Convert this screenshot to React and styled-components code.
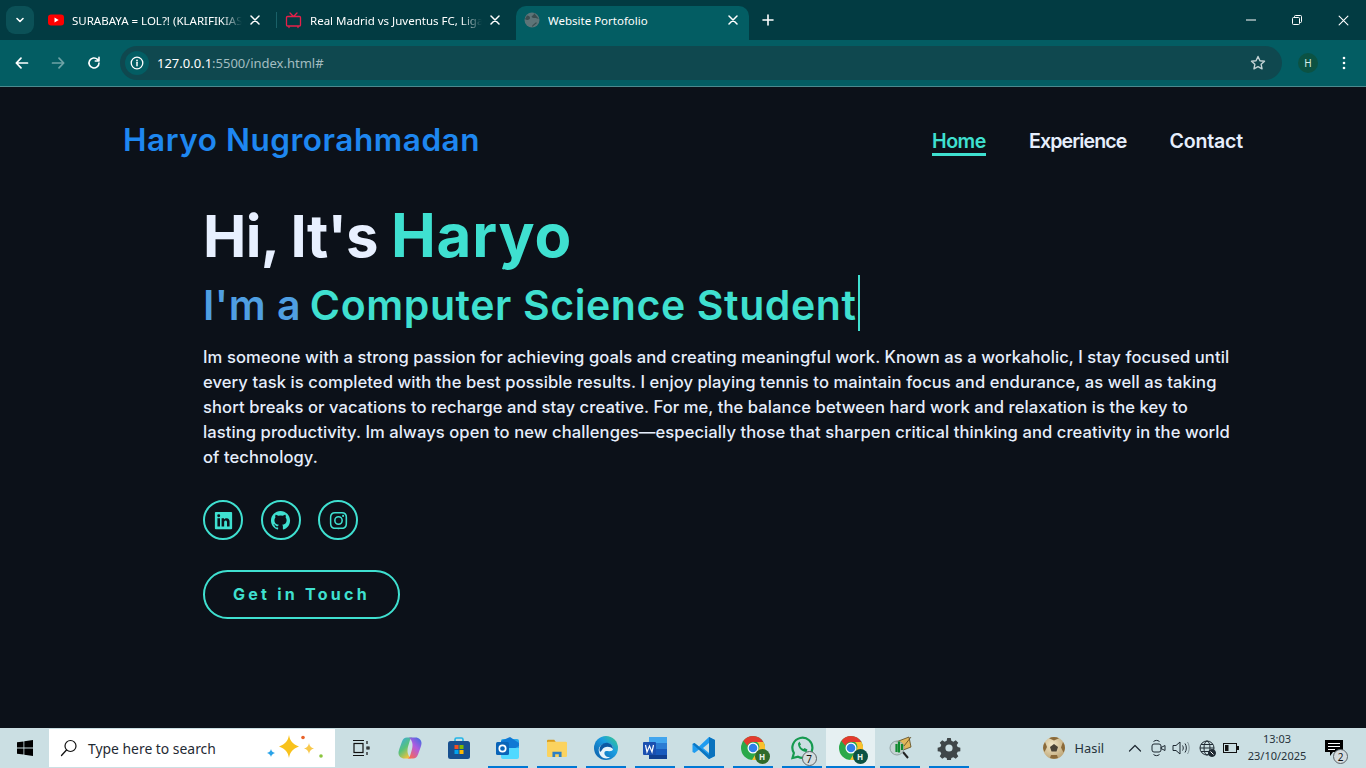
import React from "react";
import styled, { createGlobalStyle } from "styled-components";
import { BiLogoLinkedinSquare, BiLogoGithub, BiLogoInstagram } from "react-icons/bi";

const Global = createGlobalStyle`
  html, body { margin: 0; padding: 0; height: 100%; overflow: hidden; background: #0c1119; }
  * { box-sizing: border-box; }
`;

const Shell = styled.div`
  width: 1366px; height: 768px; display: flex; flex-direction: column;
  font-family: "Noto Sans", sans-serif;
`;

/* ---------- browser chrome ---------- */
const TabStrip = styled.div`
  height: 40px; background: #023b42; display: flex; align-items: flex-end; padding-left: 6px; position: relative;
`;
const TabMenu = styled.div`
  width: 28px; height: 28px; margin-bottom: 6px; border-radius: 9px; background: #0b5157;
  display: flex; align-items: center; justify-content: center; margin-right: 6px;
`;
const Tab = styled.div`
  width: ${p => p.$w}px; height: 34px; display: flex; align-items: center; gap: 8px;
  padding: 0 ${p => p.$active ? 11 : 8}px 6px 8px; color: #fff; font-size: 11.5px;
  background: ${p => p.$active ? "#035d63" : "transparent"};
  border-radius: ${p => p.$active ? "10px 10px 0 0" : "0"};
  margin-left: ${p => p.$ml || 0}px;
`;
const TabTitle = styled.span`
  flex: 1; white-space: nowrap; overflow: hidden;
  ${p => p.$fade && "mask-image: linear-gradient(90deg, #000 88%, transparent 100%);"}
`;
const TabDivider = styled.div`
  width: 1px; height: 16px; margin: 0 0 12px 8px; background: #1a6168;
`;
const NewTab = styled.div`
  width: 28px; height: 34px; margin-left: 5px; padding-bottom: 6px; display: flex; align-items: center; justify-content: center;
`;
const WindowControls = styled.div`
  margin-left: auto; height: 40px; display: flex;
`;
const WinBtn = styled.div`
  width: 46px; height: 40px; display: flex; align-items: center; justify-content: center;
`;
const Toolbar = styled.div`
  height: 47px; background: #035d63; border-bottom: 1px solid #4b8a8e; display: flex; align-items: center;
  padding: 0 0 1px 8px;
`;
const NavBtn = styled.div`
  width: 28px; height: 28px; margin-right: 8px; display: flex; align-items: center; justify-content: center;
`;
const Omnibox = styled.div`
  width: 1162px; height: 34px; border-radius: 17px; background: #0f484f; display: flex; align-items: center;
  padding: 0 16px 0 5px; font-size: 13px; font-family: "Noto Sans", sans-serif; margin-left: 4px;
`;
const InfoChip = styled.div`
  width: 24px; height: 24px; border-radius: 50%; background: #035d63; display: flex; align-items: center; justify-content: center; margin-right: 8px;
`;
const Host = styled.span`color: #fff;`;
const UrlRest = styled.span`color: #a3bdc0;`;
const Star = styled.div`margin-left: auto; display: flex;`;
const Avatar = styled.div`
  width: 20px; height: 20px; border-radius: 50%; background: #0b5243; color: #d8efe8; font-size: 10px; display: flex;
  align-items: center; justify-content: center; margin-left: 16px;
`;
const Kebab = styled.div`margin-left: 24px; display: flex;`;

/* ---------- page ---------- */
const Page = styled.main`
  flex: 1; background: #0c1119; padding: 0 123px; font-family: Inter, sans-serif; overflow: hidden;
`;
const Header = styled.header`
  height: 106px; display: flex; align-items: center; justify-content: space-between; padding-bottom: 2px;
`;
const Logo = styled.a`
  color: #1e87f0; font-size: 31.5px; font-weight: 600; letter-spacing: 0.55px;
`;
const Nav = styled.nav`display: flex; gap: 43px;`;
const NavLink = styled.a`
  font-size: 19.6px; font-weight: 600; line-height: 26px; height: 34px; padding-top: 6px;
  letter-spacing: ${p => p.$ls}px;
  color: ${p => p.$active ? "#3fe0d0" : "#e6eefc"};
  border-bottom: ${p => p.$active ? "3px solid #3fe0d0" : "none"};
`;
const Content = styled.section`
  padding-left: 80px; display: flex; flex-direction: column; align-items: flex-start;
`;
const Title = styled.h1`
  margin: 5px 0 3px; height: 74px; font-size: 58px; line-height: 74px; font-weight: 650; color: #e8f0ff; letter-spacing: -0.7px;
  white-space: pre;
`;
const Accent = styled.span`color: #3fe0d0; font-size: 60px; letter-spacing: 0.9px;`;
const Subtitle = styled.h2`
  margin: 0; height: 56px; font-size: 41px; line-height: 52px; font-weight: 600; color: #3fe0d0; display: flex; letter-spacing: 0.5px;
  white-space: pre;
`;
const Lead = styled.span`color: #4f9fe2; padding-top: 4px; margin-right: -2px;`;
const Typed = styled.span`border-right: 2px solid #3fe0d0; padding: 4px 1px 0 0; letter-spacing: 0.6px;`;
const Para = styled.p`
  margin: 14px 0 0; font-size: 16.6px; line-height: 25px; font-weight: 450; color: #e6eefc; white-space: nowrap; letter-spacing: 0.07px;
`;
const Socials = styled.div`display: flex; gap: 17.5px; margin-top: 30px;`;
const Social = styled.a`
  width: 40px; height: 40px; border: 2px solid #3fe0d0; border-radius: 50%; color: #3fe0d0; display: flex;
  align-items: center; justify-content: center; font-size: 23px;
`;
const Cta = styled.a`
  margin-top: 30px; width: 197px; height: 49px; border: 2px solid #3fe0d0; border-radius: 25px; color: #3fe0d0; padding-bottom: 2px;
  display: flex; align-items: center; justify-content: center; font-size: 16px; font-weight: 700; letter-spacing: 3.25px;
`;

/* ---------- taskbar ---------- */
const Taskbar = styled.footer`
  height: 40px; background: #cbdfe3; display: flex; align-items: stretch; position: relative;
`;
const Start = styled.div`width: 49px; display: flex; align-items: center; justify-content: center;`;
const Search = styled.div`
  width: 286px; height: 38px; margin-top: 1px; background: #fff; display: flex; align-items: center; padding: 0 8px 0 11px;
  font-family: "Noto Sans", sans-serif; font-size: 13.9px; color: #1f2a33; gap: 10px; margin-right: 1px;
`;
const SearchArt = styled.div`margin-left: auto; display: flex;`;
const TaskCell = styled.div`
  width: 49px; position: relative; display: flex; align-items: center; justify-content: center;
  background: ${p => p.$active ? "#e6f0f2" : "transparent"};
  ${p => p.$open && `&::after { content: ""; position: absolute; left: ${p.$active ? 0 : 4.5}px; right: ${p.$active ? 0 : 4.5}px; bottom: 0; height: 2px; background: #0078d4; }`}
`;
const Tray = styled.div`
  margin-left: auto; display: flex; align-items: center; color: #1f2a33; font-family: "Noto Sans", sans-serif; font-size: 12.8px;
`;
const TrayText = styled.span`margin: 0 17px 0 10px; color: #26323a;`;
const TrayIcon = styled.div`width: ${p => p.$w || 24}px; display: flex; justify-content: center;`;
const Clock = styled.div`
  width: 72px; text-align: center; font-size: 11px; line-height: 17px; color: #26323a; margin-top: -2px;
`;
const Notify = styled.div`margin: 0 19px 0 8px; width: 26px; position: relative; display: flex; justify-content: center;`;
const CountBadge = styled.span`
  position: absolute; right: ${p => p.$r ?? -3}px; bottom: ${p => p.$b ?? -6}px; width: 15px; height: 15px; border-radius: 50%;
  background: #d5dcde; border: 1px solid #5c6468; color: #111; font-size: 10px; display: flex; align-items: center; justify-content: center;
`;
const IconWrap = styled.div`position: relative; display: flex;`;
const AccountDot = styled.span`
  position: absolute; right: -5px; bottom: -4px; width: 15px; height: 15px; border-radius: 50%;
  background: ${p => p.$c}; color: #e8f2ea; font-size: 8px; font-weight: 700; display: flex; align-items: center; justify-content: center;
`;

/* ---------- drawings ---------- */
const stroke = { fill: "none", stroke: "currentColor", strokeLinecap: "round", strokeLinejoin: "round" };
const Chevron = () => <svg width="12" height="12" viewBox="0 0 12 12" color="#fff"><path d="M3 4.500 6 7.500 9 4.500" {...stroke} strokeWidth="1.600" /></svg>;
const YouTube = () => <svg width="16" height="16" viewBox="0 0 16 16"><rect y="2.500" width="16" height="11" rx="3" fill="#f00" /><path d="M6.500 5.600 10.700 8 6.500 10.400z" fill="#fff" /></svg>;
const TvIcon = () => <svg width="17" height="17" viewBox="0 0 17 17" color="#e6204a"><path d="M5 1l3.500 3.500L12 1M2.500 4.500h12a1 1 0 0 1 1 1V13a1 1 0 0 1-1 1h-12a1 1 0 0 1-1-1V5.500a1 1 0 0 1 1-1zM4 14.500v1M13 14.500v1" {...stroke} strokeWidth="1.300" /></svg>;
const Globe = () => <svg width="16" height="16" viewBox="0 0 16 16"><circle cx="8" cy="8" r="7.500" fill="#5d7478" /><path d="M3 3.500c2 0 3 1 3 2.500S4 8 3 8 1 7 1 7zM10 1c0 2-1 2.500-2 3s0 2 2 2 5 1 5 1M8 15c0-2 1-2 2-3s2-2 3-1" fill="#3a4d50" /></svg>;
const Close = ({ s = 10, w = 1.500 }) => <svg width={s} height={s} viewBox="0 0 10 10" color="#fff"><path d="M1 1l8 8M9 1 1 9" {...stroke} strokeWidth={w} /></svg>;
const Plus = () => <svg width="12" height="12" viewBox="0 0 12 12" color="#fff"><path d="M6 1v10M1 6h10" {...stroke} strokeWidth="1.600" /></svg>;
const Minimize = () => <svg width="10" height="10" viewBox="0 0 10 10"><path d="M0 5h10" stroke="#fff" /></svg>;
const Restore = () => <svg width="10" height="10" viewBox="0 0 10 10" fill="none" stroke="#fff"><rect x=".5" y="2.500" width="7" height="7" rx="1" /><path d="M2.500 2.500V1.500a1 1 0 0 1 1-1h5a1 1 0 0 1 1 1v5a1 1 0 0 1-1 1h-1" /></svg>;
const Arrow = ({ flip, c }) => <svg width="16" height="16" viewBox="0 0 16 16" color={c} style={flip ? { transform: "scaleX(-1)" } : undefined}><path d="M13.500 8h-11M7 3.200 2.300 8 7 12.800" {...stroke} strokeWidth="1.700" /></svg>;
const Reload = () => <svg width="16" height="16" viewBox="0 0 16 16" color="#fff"><path d="M13 8a5 5 0 1 1-1.500-3.600L13 6M13 2.200V6H9.300" {...stroke} strokeWidth="1.600" /></svg>;
const Info = () => <svg width="14" height="14" viewBox="0 0 14 14" color="#fff"><circle cx="7" cy="7" r="5.800" {...stroke} strokeWidth="1.300" /><path d="M7 6.300v3.400" {...stroke} strokeWidth="1.500" /><circle cx="7" cy="4.300" r=".9" fill="#fff" /></svg>;
const StarIcon = () => <svg width="16" height="16" viewBox="0 0 16 16" color="#c3d3d5"><path d="M8 1.500l1.950 4.200 4.550.55-3.350 3.100.9 4.500L8 11.600l-4.050 2.250.9-4.500L1.500 6.250l4.550-.55z" {...stroke} strokeWidth="1.400" /></svg>;
const Dots = () => <svg width="4" height="14" viewBox="0 0 4 14" fill="#fff"><circle cx="2" cy="2" r="1.300" /><circle cx="2" cy="7" r="1.300" /><circle cx="2" cy="12" r="1.300" /></svg>;

const WinLogo = () => <svg width="16" height="16" viewBox="0 0 16 16" fill="#000"><path d="M0 2.300 6.500 1.400v6.200H0zM7.300 1.300 16 0v7.600H7.300zM0 8.400h6.500v6.200L0 13.700zM7.300 8.400H16V16l-8.700-1.300z" /></svg>;
const SearchGlass = () => <svg width="18" height="18" viewBox="0 0 18 18" color="#111"><circle cx="10.500" cy="7" r="5.500" {...stroke} strokeWidth="1.200" /><path d="M6.500 11 1.500 16.500" {...stroke} strokeWidth="1.300" /></svg>;
const Sparkles = () => (
  <svg width="62" height="26" viewBox="0 0 62 26">
    <path d="M24 0c1 6 3.500 9 10 11.500-6.500 2.500-9 5.500-10 11.500-1-6-3.500-9-10-11.500C20.500 9 23 6 24 0z" fill="#f8c21c" />
    <path d="M44 8c.5 3 1.800 4.500 5 5.500-3.200 1-4.500 2.500-5 5.500-.5-3-1.800-4.500-5-5.500 3.200-1 4.500-2.500 5-5.500z" fill="#f8c84a" />
    <path d="M6 14c.4 2 1.300 3 4 4-2.700 1-3.600 2-4 4-.4-2-1.300-3-4-4 2.700-1 3.600-2 4-4z" fill="#2aa3e8" />
    <circle cx="38" cy="2.500" r="1.800" fill="#e8622a" />
    <circle cx="56" cy="21" r="1.800" fill="#8bc53f" />
  </svg>
);
const TaskView = () => <svg width="18" height="18" viewBox="0 0 18 18" fill="none" stroke="#111" strokeWidth="1.200"><path d="M1 1.500h11M1 16.500h11" /><rect x="2" y="4.500" width="9" height="9" /><path d="M15 2v3M15 8h2v2h-2zM15 13v3" /></svg>;
const Copilot = () => (
  <svg width="24" height="24" viewBox="0 0 24 24">
    <defs>
      <linearGradient id="cpA" x1="0" y1="0" x2=".6" y2="1"><stop offset="0" stopColor="#37a8ec" /><stop offset=".55" stopColor="#58c27a" /><stop offset="1" stopColor="#f2c23c" /></linearGradient>
      <linearGradient id="cpB" x1="1" y1="0" x2=".3" y2="1"><stop offset="0" stopColor="#2f6ee0" /><stop offset=".5" stopColor="#b05be0" /><stop offset="1" stopColor="#f4695c" /></linearGradient>
    </defs>
    <path d="M9 1.500h5.500c-1.500.5-2.300 1.800-2.800 3.500l-1.200 4c-.8 2.800-1 4-1 6.500 0 2.500 1.500 5 3.500 7H6.500C3 22.500.5 20 .5 17c0-1.500.6-3.500 1.500-6l2-5.500C5 2.800 6.500 1.500 9 1.500z" fill="url(#cpA)" />
    <path d="M15 22.500H9.500c1.500-.5 2.300-1.800 2.800-3.500l1.200-4c.8-2.800 1-4 1-6.500 0-2.500-1.500-5-3.500-7h6.500c3.500 0 6 2.500 6 5.500 0 1.500-.6 3.500-1.500 6l-2 5.500c-1 2.700-2.500 4-5 4z" fill="url(#cpB)" />
  </svg>
);
const Store = () => (
  <svg width="24" height="24" viewBox="0 0 24 24">
    <path d="M8 6V3.500A1.500 1.500 0 0 1 9.500 2h5A1.500 1.500 0 0 1 16 3.500V6" fill="none" stroke="#23b5e8" strokeWidth="1.600" />
    <rect x="1" y="5" width="22" height="18" rx="2.500" fill="#17508f" />
    <rect x="7.500" y="9" width="4" height="4" fill="#f25022" /><rect x="12.500" y="9" width="4" height="4" fill="#7fba00" />
    <rect x="7.500" y="14" width="4" height="4" fill="#00a4ef" /><rect x="12.500" y="14" width="4" height="4" fill="#ffb900" />
  </svg>
);
const Outlook = () => (
  <svg width="24" height="24" viewBox="0 0 24 24">
    <rect x="5" y="3" width="18" height="18" rx="2" fill="#28a8ea" />
    <path d="M14 1l9 6v3l-9 5-9-5V5z" fill="#0f78d4" />
    <path d="M5 12h18v9a2 2 0 0 1-2 2H7a2 2 0 0 1-2-2z" fill="#50d9ff" />
    <rect y="6" width="13" height="13" rx="1.500" fill="#0a64b8" />
    <circle cx="6.500" cy="12.500" r="3.200" fill="none" stroke="#fff" strokeWidth="1.700" />
  </svg>
);
const Folder = () => (
  <svg width="22" height="20" viewBox="0 0 24 22">
    <path d="M1 3a1 1 0 0 1 1-1h7l2 3H1z" fill="#d89c1d" />
    <rect x="1" y="4" width="22" height="17" rx="1.500" fill="#fbd35f" />
    <path d="M7 21v-6h10v6h-3v-3h-4v3z" fill="#2d7fc4" />
  </svg>
);
const Edge = () => (
  <svg width="24" height="24" viewBox="0 0 24 24">
    <defs><linearGradient id="edA" x1="0" y1="1" x2="1" y2="0"><stop offset="0" stopColor="#0c59a4" /><stop offset=".6" stopColor="#1b9de2" /><stop offset="1" stopColor="#3bd07f" /></linearGradient></defs>
    <circle cx="12" cy="12" r="12" fill="url(#edA)" />
    <path d="M10 8c4-2 9 0 9 5 0 2-3 2.500-5 2-3-.5-4.500 1-3 4 1 2 4 2.500 6 2-5 3-11 1-12-5C4 12 6 9 10 8z" fill="#fff" opacity=".9" />
    <path d="M6 16c-2-5 3-10 8-9 3 .5 5 3 5 6-3-3-9-3-11 1-.6 1-1.300 1.500-2 2z" fill="#0c59a4" />
  </svg>
);
const Word = () => (
  <svg width="24" height="24" viewBox="0 0 24 24">
    <rect x="6" y="1" width="18" height="6" fill="#41a5ee" /><rect x="6" y="7" width="18" height="6" fill="#2b7cd3" />
    <rect x="6" y="13" width="18" height="6" fill="#185abd" /><rect x="6" y="19" width="18" height="4" fill="#103f91" />
    <rect y="6" width="13" height="13" rx="1" fill="#1a4fb0" />
    <path d="M2.500 9l1.500 7 2.500-6 2.500 6 1.500-7" fill="none" stroke="#fff" strokeWidth="1.200" />
  </svg>
);
const VSCode = () => (
  <svg width="24" height="24" viewBox="0 0 24 24">
    <path d="M17 1l6 3v16l-6 3L7 13.500 2.500 17 .5 16v-8l2-1L7 10.500z" fill="#1f9cf0" />
    <path d="M17 7l-6 5 6 5z" fill="#cbdfe3" />
    <path d="M17 1l6 3v16l-6 3z" fill="#0a72bd" />
    <path d="M2.500 7 17 19v4L.5 8z" fill="#0a72bd" opacity=".9" />
  </svg>
);
const Chrome = () => (
  <svg width="24" height="24" viewBox="0 0 24 24">
    <circle cx="12" cy="12" r="12" fill="#2aa84a" />
    <path d="M12 0a12 12 0 0 1 10.400 6H12a6 6 0 0 0-5.600 3.800L2.400 4.900A12 12 0 0 1 12 0z" fill="#e33b2e" />
    <path d="M22.400 6A12 12 0 0 1 11 24l5.200-8.500A6 6 0 0 0 16 6z" fill="#fbc02d" />
    <circle cx="12" cy="12" r="5.500" fill="#fff" /><circle cx="12" cy="12" r="4.300" fill="#2f7fe8" />
  </svg>
);
const WhatsApp = () => (
  <svg width="24" height="24" viewBox="0 0 24 24" fill="none" stroke="#169a50" strokeWidth="2.200">
    <path d="M2.500 22l1.400-5A10 10 0 1 1 8 20.700z" />
    <path d="M8 7.500c0 4.500 4 8.500 8.500 8.500l1-2.500-3-1.500-1 1c-1.500-.5-3-2-3.500-3.500l1-1-1.500-3z" fill="#169a50" stroke="none" />
  </svg>
);
const Tool = () => (
  <svg width="24" height="24" viewBox="0 0 24 24">
    <path d="M15 16l5 6" stroke="#222" strokeWidth="2" />
    <path d="M8 6l13-5 2 10-13 5z" fill="#e0b65a" stroke="#5a4820" strokeWidth=".8" />
    <path d="M8 6l8 4 7-9" fill="none" stroke="#5a4820" strokeWidth=".8" />
    <circle cx="9" cy="12" r="7" fill="#c6d2d2" opacity=".9" stroke="#8a9a9a" />
    <path d="M11 5.500v11M14 8v6M8.500 8v8" stroke="#0f8a2f" strokeWidth="2.200" />
  </svg>
);
const Gear = () => <svg width="24" height="24" viewBox="0 0 24 24" fill="#3f4648"><path fillRule="evenodd" d="M10 1h4l.6 3 2.300 1 2.600-1.700 2.800 2.800-1.700 2.600 1 2.300 3 .6v4l-3 .6-1 2.300 1.700 2.600-2.800 2.800-2.600-1.700-2.300 1-.6 3h-4l-.6-3-2.300-1-2.600 1.700-2.800-2.800 1.700-2.600-1-2.300-3-.6v-4l3-.6 1-2.300L1.700 6.100l2.800-2.800 2.600 1.700 2.300-1zM12 8a4 4 0 1 0 0 8 4 4 0 0 0 0-8z" transform="translate(1.200 1.200) scale(.9)" /></svg>;
const Ball = () => (
  <svg width="22" height="22" viewBox="0 0 22 22">
    <defs><radialGradient id="ballG" cx=".4" cy=".35" r=".75"><stop offset="0" stopColor="#f2e8c8" /><stop offset="1" stopColor="#b9a070" /></radialGradient></defs>
    <circle cx="11" cy="11" r="11" fill="url(#ballG)" />
    <path d="M11 7l4 3-1.500 4.500h-5L7 10z" fill="#4a4336" />
    <path d="M11 0a11 11 0 0 1 5 1.200L11 3.500 6 1.200A11 11 0 0 1 11 0zM0 11a11 11 0 0 1 2-6l2 5-2.500 5A11 11 0 0 1 0 11zM22 11a11 11 0 0 1-1.500 4.500L18 10.500 20 5a11 11 0 0 1 2 6zM7 21l1-3h6l1 3a11 11 0 0 1-8 0z" fill="#8a6a3a" />
  </svg>
);
const Caret = () => <svg width="14" height="14" viewBox="0 0 14 14" color="#1f2a33"><path d="M1.500 10 7 4.500 12.500 10" {...stroke} strokeWidth="1.200" /></svg>;
const Meet = () => <svg width="16" height="18" viewBox="0 0 16 18" fill="none" stroke="#1f2a33"><rect x="1" y="5" width="9" height="8" rx="2" /><path d="M10 8.500l4-2v5l-4-2zM2.500 2.500c2-1.500 4-1.500 6 0M2.500 15.500c2 1.500 4 1.500 6 0" /></svg>;
const Speaker = () => <svg width="18" height="16" viewBox="0 0 18 16" fill="none" stroke="#1f2a33"><path d="M1 5.500h3L8 2v12l-4-3.500H1z" /><path d="M10.500 5.500c1 1.500 1 3.500 0 5M13 3.500c1.800 2.500 1.800 6.500 0 9" /><path d="M15.500 2c2.200 3.500 2.200 8.500 0 12" opacity=".4" /></svg>;
const Network = () => <svg width="17" height="17" viewBox="0 0 17 17" fill="none" stroke="#1f2a33"><circle cx="8" cy="8" r="7" /><ellipse cx="8" cy="8" rx="3" ry="7" /><path d="M1 8h14M2 4.500h12M2 11.500h12" /><circle cx="13" cy="13" r="3.500" fill="#1f2a33" /><path d="M11.500 11.500l3 3" stroke="#fff" /></svg>;
const Battery = () => <svg width="16" height="10" viewBox="0 0 16 10"><rect x=".5" y=".5" width="13" height="9" fill="none" stroke="#111" /><rect x="2" y="2" width="3.500" height="6" fill="#111" /><rect x="14" y="3" width="2" height="4" fill="#111" /></svg>;
const Chat = () => <svg width="18" height="16" viewBox="0 0 18 16"><path d="M0 0h18v12H8l-3 4v-4H0z" fill="#000" /><path d="M3 3.500h12M3 6.500h12M3 9.500h7" stroke="#fff" /></svg>;

const paragraph = [
  "Im someone with a strong passion for achieving goals and creating meaningful work. Known as a workaholic, I stay focused until",
  "every task is completed with the best possible results. I enjoy playing tennis to maintain focus and endurance, as well as taking",
  "short breaks or vacations to recharge and stay creative. For me, the balance between hard work and relaxation is the key to",
  "lasting productivity. Im always open to new challenges—especially those that sharpen critical thinking and creativity in the world",
  "of technology.",
];

const cells = [
  { icon: <TaskView /> },
  { icon: <Copilot /> },
  { icon: <Store /> },
  { icon: <Outlook />, open: true },
  { icon: <Folder />, open: true },
  { icon: <Edge />, open: true },
  { icon: <Word />, open: true },
  { icon: <VSCode />, open: true },
  { icon: <Chrome />, open: true, dot: "#2f6b2a" },
  { icon: <WhatsApp />, open: true, count: 7 },
  { icon: <Chrome />, open: true, active: true, dot: "#0b5243" },
  { icon: <Tool />, open: true },
  { icon: <Gear />, open: true },
];

export default function App() {
  return (
    <Shell>
      <Global />
      <TabStrip>
        <TabMenu><Chevron /></TabMenu>
        <Tab $w={228}><YouTube /><TabTitle $fade>SURABAYA = LOL?! (KLARIFIKIAS</TabTitle><Close /></Tab>
        <TabDivider />
        <Tab $w={231}><TvIcon /><TabTitle $fade>Real Madrid vs Juventus FC, Liga</TabTitle><Close /></Tab>
        <Tab $w={233} $active $ml={8}><Globe /><TabTitle>Website Portofolio</TabTitle><Close /></Tab>
        <NewTab><Plus /></NewTab>
        <WindowControls>
          <WinBtn><Minimize /></WinBtn>
          <WinBtn><Restore /></WinBtn>
          <WinBtn><Close s={11} w={1} /></WinBtn>
        </WindowControls>
      </TabStrip>
      <Toolbar>
        <NavBtn><Arrow c="#fff" /></NavBtn>
        <NavBtn><Arrow flip c="#6fa3a6" /></NavBtn>
        <NavBtn><Reload /></NavBtn>
        <Omnibox>
          <InfoChip><Info /></InfoChip>
          <Host>127.0.0.1</Host><UrlRest>:5500/index.html#</UrlRest>
          <Star><StarIcon /></Star>
        </Omnibox>
        <Avatar>H</Avatar>
        <Kebab><Dots /></Kebab>
      </Toolbar>
      <Page>
        <Header>
          <Logo>Haryo Nugrorahmadan</Logo>
          <Nav>
            <NavLink $active $ls={-0.45}>Home</NavLink>
            <NavLink $ls={-0.9}>Experience</NavLink>
            <NavLink $ls={-0.2}>Contact</NavLink>
          </Nav>
        </Header>
        <Content>
          <Title>Hi, It's <Accent>Haryo</Accent></Title>
          <Subtitle><Lead>I'm a </Lead><Typed>Computer Science Student</Typed></Subtitle>
          <Para>{paragraph.map((l, i) => <React.Fragment key={i}>{l}<br /></React.Fragment>)}</Para>
          <Socials>
            <Social><BiLogoLinkedinSquare /></Social>
            <Social><BiLogoGithub /></Social>
            <Social><BiLogoInstagram /></Social>
          </Socials>
          <Cta>Get in Touch</Cta>
        </Content>
      </Page>
      <Taskbar>
        <Start><WinLogo /></Start>
        <Search><SearchGlass /><span>Type here to search</span><SearchArt><Sparkles /></SearchArt></Search>
        {cells.map((c, i) => (
          <TaskCell key={i} $open={c.open} $active={c.active}>
            <IconWrap>
              {c.icon}
              {c.dot && <AccountDot $c={c.dot}>H</AccountDot>}
              {c.count && <CountBadge>{c.count}</CountBadge>}
            </IconWrap>
          </TaskCell>
        ))}
        <Tray>
          <Ball />
          <TrayText>Hasil</TrayText>
          <TrayIcon $w={28}><Caret /></TrayIcon>
          <TrayIcon $w={20}><Meet /></TrayIcon>
          <TrayIcon $w={24}><Speaker /></TrayIcon>
          <TrayIcon $w={28}><Network /></TrayIcon>
          <TrayIcon $w={20}><Battery /></TrayIcon>
          <Clock>13:03<br />23/10/2025</Clock>
          <Notify><Chat /><CountBadge $r={-1} $b={-8}>2</CountBadge></Notify>
        </Tray>
      </Taskbar>
    </Shell>
  );
}
